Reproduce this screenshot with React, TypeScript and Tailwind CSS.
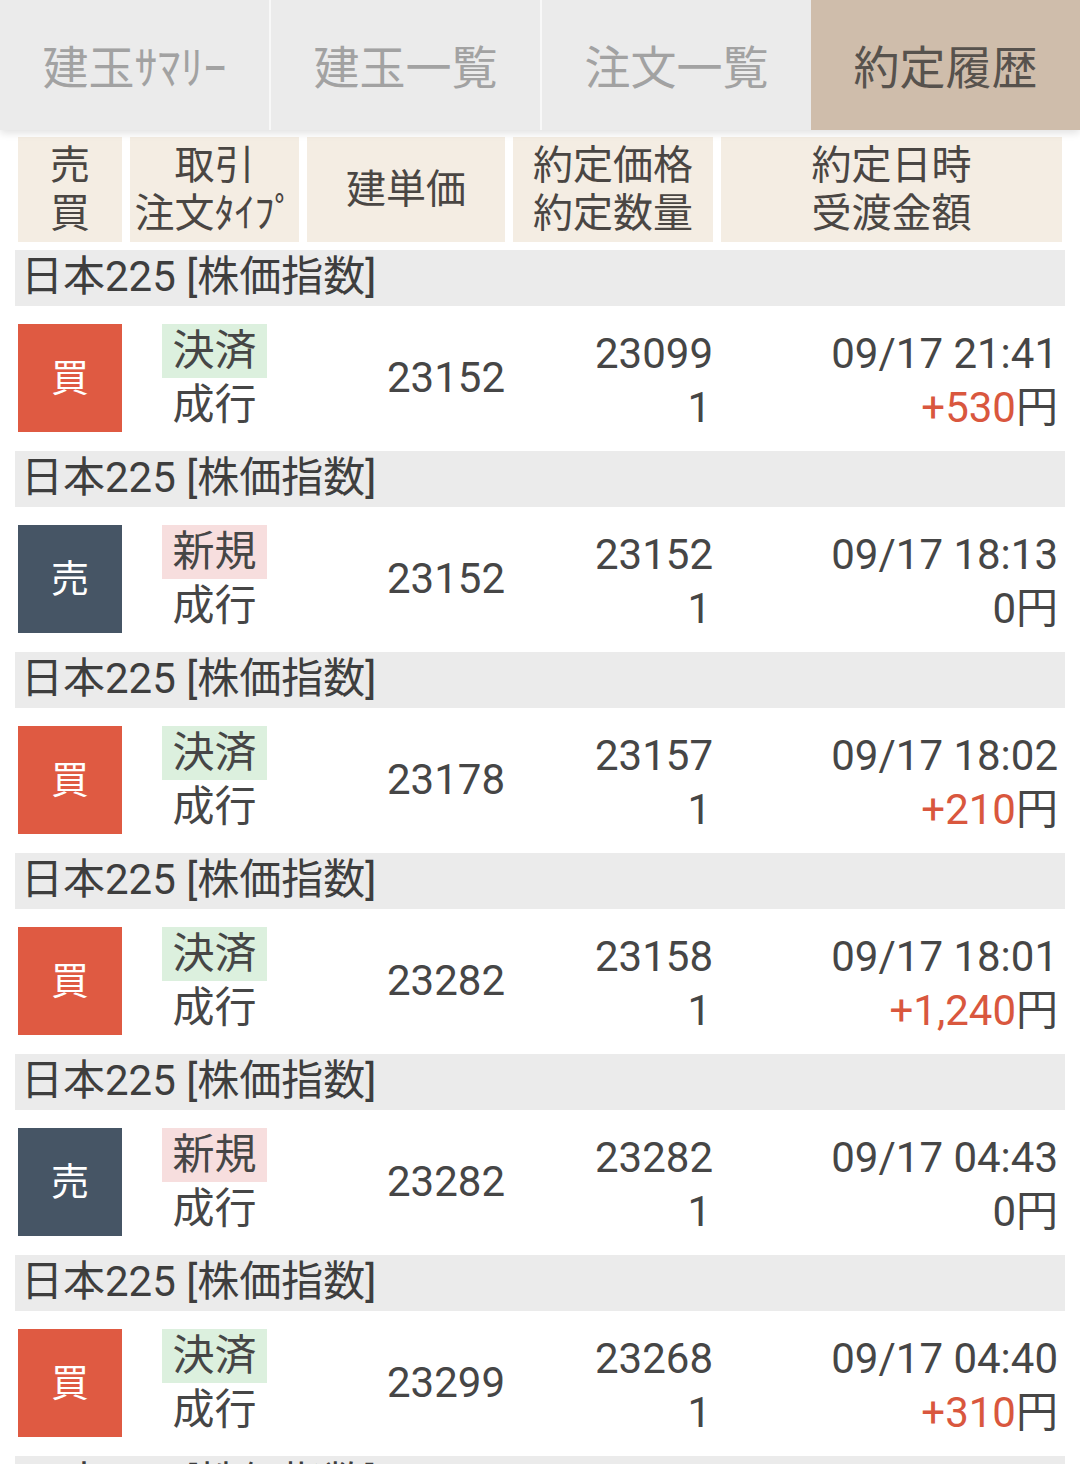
const tabs = ['建玉ｻﾏﾘｰ', '建玉一覧', '注文一覧', '約定履歴']

type Trade = {
  side: 'buy' | 'sell'
  kind: '決済' | '新規'
  entry: string
  price: string
  qty: string
  time: string
  amount: string
  profit: boolean
}

const trades: Trade[] = [
  { side: 'buy', kind: '決済', entry: '23152', price: '23099', qty: '1', time: '09/17 21:41', amount: '+530', profit: true },
  { side: 'sell', kind: '新規', entry: '23152', price: '23152', qty: '1', time: '09/17 18:13', amount: '0', profit: false },
  { side: 'buy', kind: '決済', entry: '23178', price: '23157', qty: '1', time: '09/17 18:02', amount: '+210', profit: true },
  { side: 'buy', kind: '決済', entry: '23282', price: '23158', qty: '1', time: '09/17 18:01', amount: '+1,240', profit: true },
  { side: 'sell', kind: '新規', entry: '23282', price: '23282', qty: '1', time: '09/17 04:43', amount: '0', profit: false },
  { side: 'buy', kind: '決済', entry: '23299', price: '23268', qty: '1', time: '09/17 04:40', amount: '+310', profit: true },
  { side: 'buy', kind: '決済', entry: '23300', price: '23270', qty: '1', time: '09/17 04:30', amount: '+300', profit: true },
]

const grid = 'grid grid-cols-[104px_169px_198px_200px_1fr] gap-2 px-[18px]'

const TradeRow = ({ t }: { t: Trade }) => {
  return (
    <>
      {/* group title */}
      <div className="mx-[15px] h-[56px] bg-[#ebebeb] pl-[6px] text-[42px] leading-[54px] text-[#3e3e3e]">
        日本225 [株価指数]
      </div>
      {/* trade */}
      <div className={`${grid} h-[145px] items-start bg-white pt-[18px] text-[42px] leading-[54px] text-[#464646]`}>
        <div
          className={`flex h-[108px] items-center justify-center text-[38px] text-white ${
            t.side === 'buy' ? 'bg-[#df5a42]' : 'bg-[#465565]'
          }`}
        >
          {t.side === 'buy' ? '買' : '売'}
        </div>
        <div className="flex flex-col items-center">
          <span className={`px-[10px] ${t.kind === '決済' ? 'bg-[#dcf0de]' : 'bg-[#f7dede]'}`}>{t.kind}</span>
          <span>成行</span>
        </div>
        <div className="flex h-[108px] items-center justify-end">{t.entry}</div>
        <div className="flex flex-col items-end pt-[3px]">
          <span>{t.price}</span>
          <span className="pr-[2px]">{t.qty}</span>
        </div>
        <div className="flex flex-col items-end pt-[3px] pr-[4px]">
          <span>{t.time}</span>
          <span>
            <span className={t.profit ? 'text-[#d9573e]' : ''}>{t.amount}</span>円
          </span>
        </div>
      </div>
    </>
  )
}

export default function App() {
  return (
    <div
      className="h-[1464px] w-[1080px] overflow-hidden bg-white"
      style={{ fontFamily: 'Roboto, "Noto Sans CJK JP", sans-serif' }}
    >
      {/* TABS */}
      <div className="relative z-10 flex h-[130px] bg-[#ebebeb] shadow-[0_3px_8px_rgba(0,0,0,0.12)]">
        {tabs.map((tab, i) => (
          <div
            key={tab}
            className={`flex flex-1 items-center justify-center pt-[6px] text-[46px] ${
              i === 3 ? 'bg-[#cfbdab] text-[#57524d]' : 'bg-[#ebebeb] text-[#a2a2a2]'
            } ${i < 2 ? 'border-r-2 border-[#f8f8f8]' : ''}`}
          >
            {tab}
          </div>
        ))}
      </div>

      {/* COLUMN HEADER */}
      <div className={`${grid} mt-[7px] mb-2 h-[105px] text-[40px] leading-[48px] text-[#4a4643]`}>
        <div className="flex flex-col items-center justify-center bg-[#f4ede3]">
          <span>売</span>
          <span>買</span>
        </div>
        <div className="flex flex-col items-center justify-center bg-[#f4ede3]">
          <span>取引</span>
          <span>注文ﾀｲﾌﾟ</span>
        </div>
        <div className="flex items-center justify-center bg-[#f4ede3]">建単価</div>
        <div className="flex flex-col items-center justify-center bg-[#f4ede3]">
          <span>約定価格</span>
          <span>約定数量</span>
        </div>
        <div className="flex flex-col items-center justify-center bg-[#f4ede3]">
          <span>約定日時</span>
          <span>受渡金額</span>
        </div>
      </div>

      {/* LIST */}
      {trades.map((t, i) => (
        <TradeRow key={i} t={t} />
      ))}
    </div>
  )
}
